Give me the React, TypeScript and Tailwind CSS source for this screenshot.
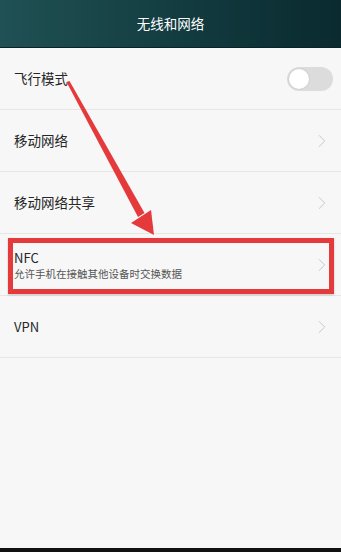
import { ChevronRight } from "lucide-react";

const font = { fontFamily: '"Noto Sans CJK SC", "Noto Sans", sans-serif' };

const Row = ({ children }: { children: React.ReactNode }) => (
  <div className="h-[62px] flex items-center pl-[14px] pr-[8px] border-b border-[#e6e6e6]">
    {children}
  </div>
);

const Chevron = () => <ChevronRight size={22} strokeWidth={1} className="text-[#c4c4c4] ml-auto" />;

export default function App() {
  return (
    <div className="relative w-[341px] h-[552px] bg-[#f7f7f7] flex flex-col overflow-hidden" style={font}>
      {/* Header */}
      <div className="h-[48px] shrink-0 flex items-center justify-center bg-gradient-to-r from-[#205154] via-[#133d41] to-[#0a2a2f] border-b border-[#0a2326]">
        <span className="text-white text-[13.5px]">无线和网络</span>
      </div>

      {/* List */}
      <div className="flex flex-col">
        <Row>
          <span className="text-[13.5px] text-[#262626]">飞行模式</span>
          <div className="ml-auto w-[46px] h-[24px] rounded-full bg-[#dcdcdc] flex items-center px-[2px]">
            <div className="w-[20px] h-[20px] rounded-full bg-white shadow-[0_0_2px_rgba(0,0,0,0.15)]" />
          </div>
        </Row>
        <Row>
          <span className="text-[13.5px] text-[#262626]">移动网络</span>
          <Chevron />
        </Row>
        <Row>
          <span className="text-[13.5px] text-[#262626]">移动网络共享</span>
          <Chevron />
        </Row>
        <Row>
          <div className="flex flex-col pt-[2px]">
            <span className="text-[13px] leading-[17px] text-[#262626]">NFC</span>
            <span className="text-[10.5px] leading-[16px] text-[#555]">允许手机在接触其他设备时交换数据</span>
          </div>
          <Chevron />
        </Row>
        <Row>
          <span className="text-[13px] text-[#262626]">VPN</span>
          <Chevron />
        </Row>
      </div>

      <div className="flex-1" />
      <div className="h-[4px] shrink-0 bg-[#111]" />

      {/* Annotation: red box */}
      <div className="absolute left-[8px] top-[238px] w-[326px] h-[56px] border-[5px] border-[#e53a3c] shadow-[0_1px_2px_rgba(0,0,0,0.2)]" />

      {/* Annotation: arrow */}
      <svg className="absolute left-0 top-0 pointer-events-none" width="341" height="552" viewBox="0 0 341 552">
        <polygon points="66.5,82 69.5,81 144.5,213 138,217" fill="#e53a3c" />
        <polygon points="131,223 151,210 154,235" fill="#e53a3c" />
      </svg>
    </div>
  );
}
